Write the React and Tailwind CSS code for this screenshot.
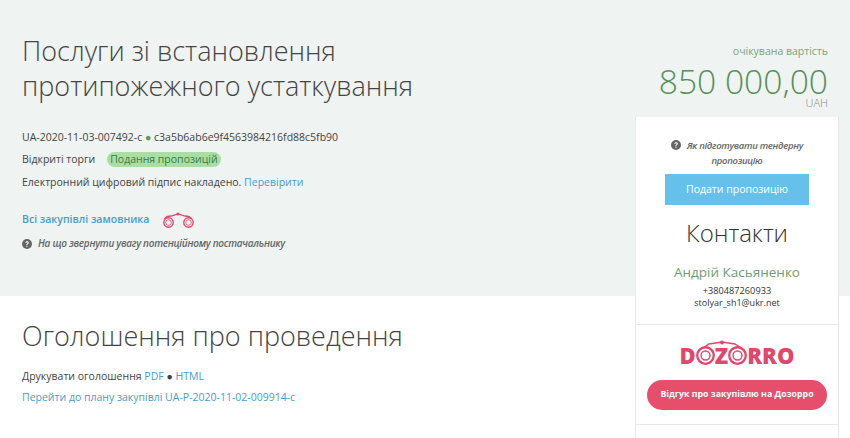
const font = { fontFamily: '"Open Sans", sans-serif' };

const QuestionIcon = ({ className }) => (
  <svg viewBox="0 0 20 20" className={className}>
    <circle cx="10" cy="10" r="10" fill="#666" />
    <path d="M6.6 7.6C6.8 5.6 8.2 4.5 10.2 4.5c2 0 3.4 1.200 3.400 2.900 0 1.400-.8 2.100-1.800 2.800-.7.5-1 .9-1 1.700H8.700c0-1.500.5-2.200 1.500-2.900.8-.5 1.200-.9 1.200-1.500 0-.7-.5-1.100-1.300-1.100-.8 0-1.300.5-1.400 1.300z" fill="#fff" />
    <rect x="8.700" y="13.400" width="2.200" height="2.200" fill="#fff" />
  </svg>
);

const Binoculars = () => (
  <svg viewBox="0 0 32 16" className="ml-[13px] h-[16px] w-[32px]" fill="none" stroke="#e0476b">
    <path d="M2.500 7C4 4.500 6 4 9 4l7-2 7 2c3 0 5 .5 6.500 3" strokeWidth="1.300" />
    <circle cx="16" cy="2" r="1.500" fill="#e0476b" stroke="none" />
    <circle cx="6.500" cy="10.500" r="4.700" strokeWidth="1.400" />
    <circle cx="6.500" cy="10.500" r="2.800" strokeWidth="0.800" />
    <circle cx="26.500" cy="10.500" r="4.700" strokeWidth="1.400" />
    <circle cx="26.500" cy="10.500" r="2.800" strokeWidth="0.800" />
  </svg>
);

const LogoRing = () => (
  <svg viewBox="0 0 20 20" className="h-[19px] w-[19px]" fill="none" stroke="#e0476b">
    <circle cx="10" cy="10" r="8.700" strokeWidth="2.400" />
    <circle cx="10" cy="10" r="4.700" strokeWidth="1.500" />
  </svg>
);

const DozorroLogo = () => (
  <div className="relative flex h-[20px] items-center text-[22px] leading-none font-extrabold text-[#e0476b]">
    <span>D</span>
    <LogoRing />
    <span>Z</span>
    <LogoRing />
    <span>RRO</span>
    <svg viewBox="0 0 44 8" className="absolute top-[-5px] left-[20px] h-[8px] w-[44px]" fill="none" stroke="#e0476b">
      <path d="M3 8 9 4l13-2 13 2 6 4" strokeWidth="1.500" />
      <circle cx="22" cy="2.500" r="2" fill="#e0476b" stroke="none" />
    </svg>
  </div>
);

const Sidebar = () => (
  <aside className="absolute top-[117px] left-[635px] h-[321px] w-[204px] border-x border-[#e8e8e8] bg-white text-center">
    <div className="px-[28px] pt-[21px]">
      <p className="text-[9.500px] leading-[15px] font-semibold tracking-[-0.3px] text-[#666] italic">
        <QuestionIcon className="mr-[6px] mb-[2px] inline h-[10px] w-[10px]" />
        Як підготувати тендерну пропозицію
      </p>
    </div>
    <button className="mx-auto mt-[6px] block h-[31px] w-[144px] bg-[#65c1ea] text-[10.500px] text-white">Подати пропозицію</button>
    <h2 className="mt-[11px] text-[24px] leading-[33px] font-light text-[#333]">Контакти</h2>
    <p className="mt-[14px] text-[13.500px] leading-[19px] text-[#6f9a70]">Андрій Касьяненко</p>
    <p className="mt-[3px] text-[9.200px] leading-[12px] text-[#333]">+380487260933</p>
    <p className="text-[9px] leading-[12px] text-[#333]">stolyar_sh1@ukr.net</p>
    <div className="mt-[15px] flex h-[101px] flex-col items-center border-y border-[#e8e8e8] pt-[20px]">
      <DozorroLogo />
      <button className="mt-[15px] h-[30px] w-[180px] rounded-full bg-[#e64e6b] text-[8.800px] font-bold text-white">Відгук про закупівлю на Дозорро</button>
    </div>
  </aside>
);

export default function App() {
  return (
    <div className="relative h-[438px] w-[850px] overflow-hidden bg-white text-[10.500px] text-[#444]" style={font}>
      <section className="flex h-[296px] justify-between bg-[#eff3f1] pt-[33px] pr-[22px] pl-[22px]">
        <div>
          <h1 className="text-[27px] leading-[35px] font-light text-[#444]">
            Послуги зі встановлення
            <br />
            протипожежного устаткування
          </h1>
          <p className="mt-[27px] leading-[15px]">
            UA-2020-11-03-007492-c <span className="text-[#5c9a5c]">●</span> c3a5b6ab6e9f4563984216fd88c5fb90
          </p>
          <div className="mt-[7px] flex h-[15px] items-center">
            Відкриті торги
            <span className="ml-[12px] rounded-full bg-[#a9dfa3] px-[3px] leading-[15px] text-[#3d7a3d]">Подання пропозицій</span>
          </div>
          <p className="mt-[8px] leading-[15px]">
            Електронний цифровий підпис накладено. <span className="text-[#4a9cc7]">Перевірити</span>
          </p>
          <div className="mt-[22px] flex items-center font-semibold text-[#4a9cc7]">
            Всі закупівлі замовника
            <Binoculars />
          </div>
          <p className="mt-[8px] flex items-center text-[10px] font-semibold tracking-[-0.28px] text-[#666] italic">
            <QuestionIcon className="mr-[6px] h-[10px] w-[10px]" />
            На що звернути увагу потенційному постачальнику
          </p>
        </div>
        <div className="pt-[11px] text-right">
          <p className="leading-[15px] text-[#7da27d]">очікувана вартість</p>
          <p className="mt-[7px] text-[33.600px] leading-[30px] font-light text-[#55905a]">850 000,00</p>
          <p className="text-[11px] leading-[13px] font-light text-[#888]">UAH</p>
        </div>
      </section>
      <section className="pt-[22px] pl-[22px]">
        <h2 className="text-[27px] leading-[35px] font-light text-[#444]">Оголошення про проведення</h2>
        <p className="mt-[16px] leading-[15px]">
          Друкувати оголошення <span className="text-[#4a9cc7]">PDF</span> ● <span className="text-[#4a9cc7]">HTML</span>
        </p>
        <p className="mt-[6px] leading-[15px] text-[#4a9cc7]">Перейти до плану закупівлі UA-P-2020-11-02-009914-c</p>
      </section>
      <Sidebar />
    </div>
  );
}
